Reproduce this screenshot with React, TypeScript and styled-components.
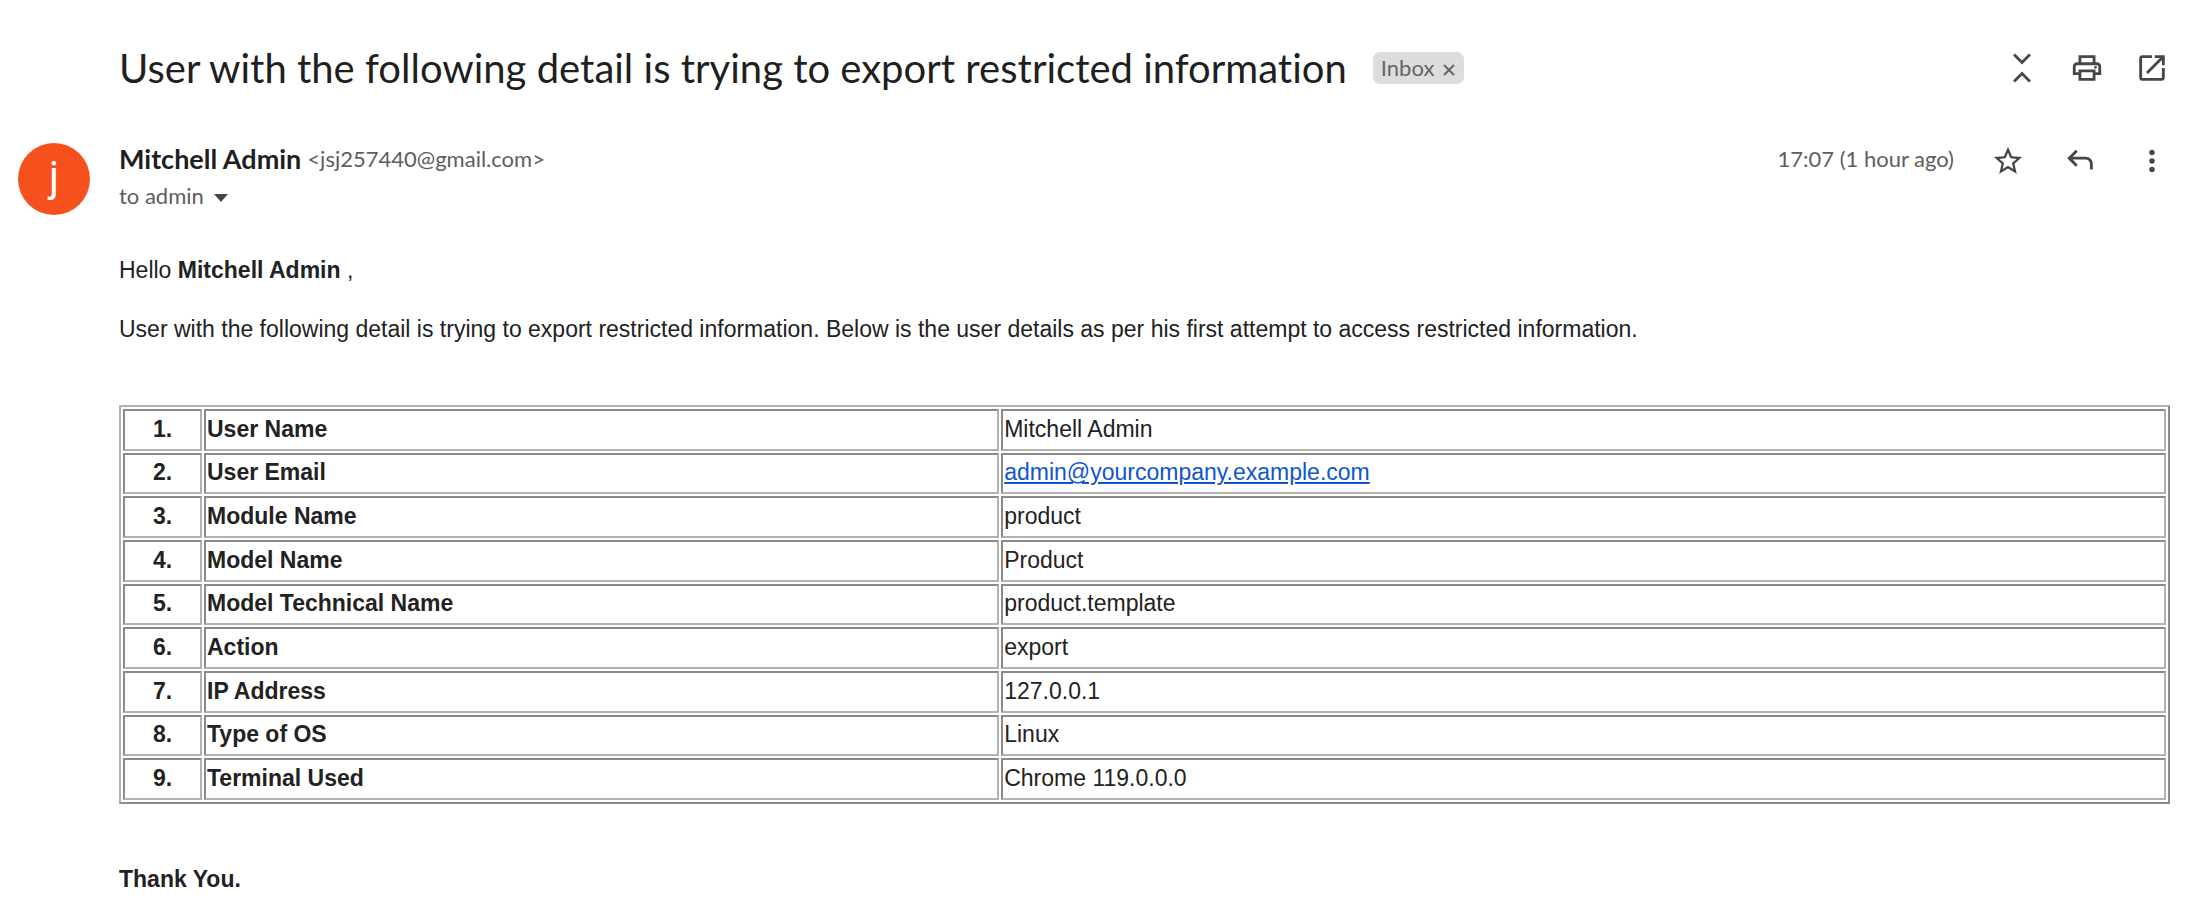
import React from 'react';
import styled, { createGlobalStyle } from 'styled-components';

const Global = createGlobalStyle`
  * { box-sizing: border-box; }
  body { margin: 0; background: #fff; color: #222; font-family: "Liberation Sans", Arial, sans-serif; }
`;

const uiFont = 'Lato, "Open Sans", sans-serif';

const Page = styled.main`
  padding: 39px 24px 16px 18px;
`;
const SubjectBar = styled.header`
  display: flex;
  align-items: center;
  height: 58px;
  padding-left: 101px;
`;
const Subject = styled.h1`
  margin: 0;
  font: 400 40px/56px ${uiFont};
  font-variant-ligatures: none;
  color: #1f1f1f;
`;
const Label = styled.span`
  display: flex;
  align-items: center;
  gap: 8px;
  height: 32px;
  margin-left: 26px;
  padding: 0 8px;
  border-radius: 7px;
  background: #ddd;
  color: #666;
  font: 400 22px/32px ${uiFont};
`;
const LabelRemove = styled.button`
  display: flex;
  margin-top: 4px;
  padding: 0;
  border: 0;
  background: none;
  color: inherit;
`;
const Actions = styled.div<{ $gap: number }>`
  display: flex;
  align-items: center;
  gap: ${p => p.$gap}px;
  margin-left: auto;
`;
const IconButton = styled.button`
  display: flex;
  justify-content: center;
  width: 36px;
  padding: 0;
  border: 0;
  background: none;
  color: #444746;
`;
const Message = styled.article`
  display: flex;
  align-items: flex-start;
  margin-top: 42px;
`;
const Avatar = styled.div`
  flex: none;
  width: 72px;
  height: 72px;
  margin: 4px 29px 0 0;
  border-radius: 50%;
  background: #f6511d;
  color: #fff;
  font: 400 42px/68px Roboto, sans-serif;
  text-align: center;
`;
const Content = styled.div`
  flex: 1;
  min-width: 0;
`;
const SenderRow = styled.div`
  display: flex;
  align-items: center;
  height: 40px;
  font: 400 22px/40px ${uiFont};
  color: #5e5e5e;
  ${IconButton} { padding-top: 4px; }
`;
const Sender = styled.strong`
  margin-right: 6px;
  font-size: 27px;
  color: #1f1f1f;
`;
const Recipient = styled.button`
  display: flex;
  align-items: center;
  gap: 10px;
  height: 34px;
  padding: 0;
  border: 0;
  background: none;
  font: 400 22px/34px ${uiFont};
  color: #5e5e5e;
  svg { margin-top: 4px; }
`;
const Body = styled.section`
  margin-top: 40px;
  font-size: 23px;
  line-height: 35px;
  p { margin: 0 0 24px; }
`;
const Details = styled.table`
  width: 100%;
  height: 399px;
  margin: 58px 0;
  table-layout: fixed;
  border: 2px solid;
  border-color: #b2b2b2 #8a8a8a #8a8a8a #b2b2b2;
  border-collapse: separate;
  border-spacing: 2px;
  font: inherit;
  line-height: 35px;
  th, td {
    padding: 0 1px 1px;
    border: 2px solid;
    border-color: #8a8a8a #b2b2b2 #b2b2b2 #8a8a8a;
    text-align: left;
  }
  th:first-child { width: 79px; text-align: center; }
  th:nth-child(2) { width: 39%; }
  a { color: #15c; }
`;

const rows = [
  ['User Name', 'Mitchell Admin'],
  ['User Email', 'admin@yourcompany.example.com'],
  ['Module Name', 'product'],
  ['Model Name', 'Product'],
  ['Model Technical Name', 'product.template'],
  ['Action', 'export'],
  ['IP Address', '127.0.0.1'],
  ['Type of OS', 'Linux'],
  ['Terminal Used', 'Chrome 119.0.0.0'],
];

function Icon({ d }: { d: string }) {
  return <svg width="34" height="34" viewBox="0 0 24 24" fill="currentColor" aria-hidden="true"><path d={d} /></svg>;
}
const icons = {
  collapse: 'M7.1 22.2 5.7 20.8 12 14.5l6.3 6.3-1.4 1.4-4.9-4.9zM7.1 1.8 5.7 3.2 12 9.5l6.3-6.3-1.4-1.4L12 6.7z',
  print: 'M19 8h-1V3H6v5H5c-1.66 0-3 1.34-3 3v6h4v4h12v-4h4v-6c0-1.66-1.34-3-3-3zM8 5h8v3H8V5zm8 14H8v-4h8v4zm2-4v-2H6v2H4v-4c0-.55.45-1 1-1h14c.55 0 1 .45 1 1v4h-2zM19 11.5a1 1 0 1 1-2 0 1 1 0 0 1 2 0z',
  open: 'M19 19H5V5h7V3H5c-1.1 0-2 .9-2 2v14c0 1.1.9 2 2 2h14c1.1 0 2-.9 2-2v-7h-2v7zM14 3v2h3.59l-9.83 9.83 1.41 1.41L19 6.41V10h2V3h-7z',
  star: 'm22 9.24-7.19-.62L12 2 9.19 8.63 2 9.24l5.46 4.73L5.82 21 12 17.27 18.18 21l-1.63-7.03L22 9.24zM12 15.4l-3.76 2.27 1-4.28-3.32-2.88 4.38-.38L12 6.1l1.71 4.04 4.38.38-3.32 2.88 1 4.28L12 15.4z',
  reply: 'M16 9H6.83l3.58-3.59L9 4l-6 6 6 6 1.41-1.41L6.83 11H16c1.65 0 3 1.35 3 3v4h2v-4c0-2.76-2.24-5-5-5z',
  more: 'M12 8c1.1 0 2-.9 2-2s-.9-2-2-2-2 .9-2 2 .9 2 2 2zm0 2c-1.1 0-2 .9-2 2s.9 2 2 2 2-.9 2-2-.9-2-2-2zm0 6c-1.1 0-2 .9-2 2s.9 2 2 2 2-.9 2-2-.9-2-2-2z',
};

export default function App() {
  return (
    <Page>
      <Global />
      <SubjectBar>
        <Subject>User with the following detail is trying to export restricted information</Subject>
        <Label>
          Inbox
          <LabelRemove aria-label="Remove label">
            <svg width="14" height="14" viewBox="0 0 14 14" stroke="currentColor" strokeWidth="2"><path d="m2 2 10 10M12 2 2 12" /></svg>
          </LabelRemove>
        </Label>
        <Actions $gap={29}>
          <IconButton aria-label="Collapse all"><Icon d={icons.collapse} /></IconButton>
          <IconButton aria-label="Print all"><Icon d={icons.print} /></IconButton>
          <IconButton aria-label="Open in new window"><Icon d={icons.open} /></IconButton>
        </Actions>
      </SubjectBar>
      <Message>
        <Avatar>j</Avatar>
        <Content>
          <SenderRow>
            <Sender>Mitchell Admin</Sender>
            <span>&lt;jsj257440@gmail.com&gt;</span>
            <Actions $gap={36}>
              <time>17:07 (1 hour ago)</time>
              <IconButton aria-label="Star"><Icon d={icons.star} /></IconButton>
              <IconButton aria-label="Reply"><Icon d={icons.reply} /></IconButton>
              <IconButton aria-label="More"><Icon d={icons.more} /></IconButton>
            </Actions>
          </SenderRow>
          <Recipient>
            to admin
            <svg width="14" height="8" viewBox="0 0 14 8" fill="#444746" aria-hidden="true"><path d="M0 0h14L7 8z" /></svg>
          </Recipient>
          <Body>
            <p>Hello <b>Mitchell Admin</b> ,</p>
            <p>User with the following detail is trying to export restricted information. Below is the user details as per his first attempt to access restricted information.</p>
            <Details>
              <tbody>
                {rows.map(([name, value], i) => (
                  <tr key={name}>
                    <th>{i + 1}.</th>
                    <th scope="row">{name}</th>
                    <td>{value.includes('@') ? <a href={`mailto:${value}`}>{value}</a> : value}</td>
                  </tr>
                ))}
              </tbody>
            </Details>
            <b>Thank You.</b>
          </Body>
        </Content>
      </Message>
    </Page>
  );
}
